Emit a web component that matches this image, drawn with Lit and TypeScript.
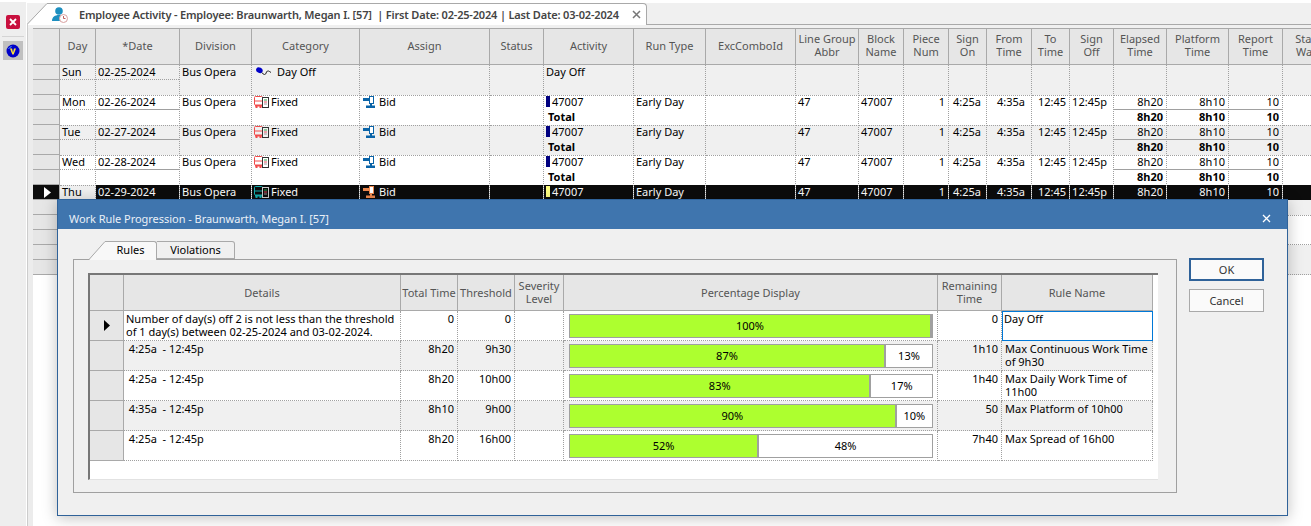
import { LitElement, css, html, nothing } from "lit";
import { customElement } from "lit/decorators.js";

const busIcon = (body: string, doc: string) => html`<svg class="ic" width="15" height="12" viewBox="0 0 15 12">
  <rect x=".5" y=".5" width="8" height="8.500" rx="1" fill="none" stroke=${body}></rect>
  <path d="M1 5h7" stroke=${body}></path>
  <path d="M1 9h7v1.500h-7z" fill=${body}></path>
  <rect x="1.500" y="10" width="2" height="2" fill=${body}></rect>
  <rect x="5.500" y="10" width="2" height="2" fill=${body}></rect>
  <rect x="8.500" y="1.500" width="6" height="10" fill="none" stroke=${doc}></rect>
  <path d="M10 4h3" stroke="#2fa84f"></path>
  <path d="M10 6h3" stroke="#e8485f"></path>
  <path d="M10 8h3" stroke="#9a9a9a"></path>
</svg>`;

const bidIcon = (c: string) => html`<svg class="ic" width="12" height="12" viewBox="0 0 12 12">
  <rect x="0" y="2" width="6" height="3" fill=${c}></rect>
  <rect x="6.500" y=".5" width="4" height="7" fill="#fff" stroke=${c}></rect>
  <rect x="7" y="7" width="2" height="3" fill=${c}></rect>
  <rect x="3" y="9.500" width="9" height="2.500" fill=${c}></rect>
</svg>`;

const dayOffIcon = html`<svg class="ic" width="16" height="9" viewBox="0 0 16 9">
  <ellipse cx="3.400" cy="3.200" rx="3.400" ry="2.700" transform="rotate(30 3.400 3.200)" fill="#0000c8"></ellipse>
  <path d="M6 5.500q1 2 2.500 2t2-2.500q.8-1.500 2-1t2.500 1.500" fill="none" stroke="#222"></path>
</svg>`;

type Day = { day: string; date: string; off?: boolean; sel?: boolean };

const days: Day[] = [
  { day: "Sun", date: "02-25-2024", off: true },
  { day: "Mon", date: "02-26-2024" },
  { day: "Tue", date: "02-27-2024" },
  { day: "Wed", date: "02-28-2024" },
  { day: "Thu", date: "02-29-2024", sel: true },
];

const headers = [
  "", "Day", "*Date", "Division", "Category", "Assign", "Status", "Activity", "Run Type", "ExcComboId",
  "Line Group\nAbbr", "Block\nName", "Piece\nNum", "Sign\nOn", "From\nTime", "To\nTime", "Sign\nOff",
  "Elapsed\nTime", "Platform\nTime", "Report\nTime", "Start\nWait",
];

const rules = [
  { d: "Number of day(s) off 2 is not less than the threshold\nof 1 day(s) between 02-25-2024 and 03-02-2024.", t: "0", th: "0", p: 100, rem: "0", name: "Day Off" },
  { d: " 4:25a  - 12:45p", t: "8h20", th: "9h30", p: 87, rem: "1h10", name: "Max Continuous Work Time\nof 9h30" },
  { d: " 4:25a  - 12:45p", t: "8h20", th: "10h00", p: 83, rem: "1h40", name: "Max Daily Work Time of\n11h00" },
  { d: " 4:35a  - 12:45p", t: "8h10", th: "9h00", p: 90, rem: "50", name: "Max Platform of 10h00" },
  { d: " 4:25a  - 12:45p", t: "8h20", th: "16h00", p: 52, rem: "7h40", name: "Max Spread of 16h00" },
];

@customElement("app-root")
export class AppRoot extends LitElement {
  static styles = css`
    :host {
      display: block;
      position: relative;
      width: 1311px;
      height: 526px;
      overflow: hidden;
      background: #fff;
      font: 11px/15px "Noto Sans", "Open Sans", sans-serif;
      color: #000;
    }
    .page { display: flex; height: 526px; }
    .tools {
      width: 26px;
      margin-top: 2px;
      background: #eee;
      display: flex;
      flex-direction: column;
      align-items: center;
      flex: none;
    }
    .close-btn {
      width: 14px;
      height: 14px;
      margin-top: 13px;
      border-radius: 2px;
      background: #c8103e;
      display: flex;
      align-items: center;
      justify-content: center;
    }
    .sep { width: 22px; height: 1px; background: #d4d4d4; margin-top: 7px; }
    .vtile {
      width: 20px;
      height: 19px;
      margin-top: 4px;
      background: #c0c0c0;
      display: flex;
      align-items: center;
      justify-content: center;
    }
    .main { flex: 1; min-width: 0; margin-left: 1px; }

    .strip {
      height: 22px;
      margin-top: 3px;
      display: flex;
      background: #f0f0f0;
      border-bottom: 1px solid #a9a9a9;
      box-sizing: border-box;
    }
    .doc-tab { display: flex; height: 22px; flex: none; }
    .doc-tab svg { flex: none; }
    .doc-tab .body {
      width: 600px;
      box-sizing: border-box;
      background: #fff;
      border-top: 1px solid #a9a9a9;
      border-right: 1px solid #a9a9a9;
      border-top-right-radius: 4px;
      display: flex;
      align-items: center;
      font-weight: 600;
      color: #444;
      letter-spacing: -.17px;
      white-space: pre;
    }
    .doc-tab .person { margin: 0 11px 0 5px; }
    .doc-tab .x { margin-left: 13px; }

    .gutter {
      height: 501px;
      box-sizing: border-box;
      padding-top: 3px;
      border-left: 1px solid #ccc;
      background:
        linear-gradient(#f0f0f0, #f0f0f0) 0 0 / 100% 3px no-repeat,
        linear-gradient(#ececec, #ececec) 0 0 / 5px 100% no-repeat;
    }
    .grid {
      --cols: 27px 36px 84px 72px 108px 130px 54px 90px 72px 90px 63px 45px 45px 38px 45px 38px 44px 53px 62px 54px 50px;
      margin-left: 5px;
    }
    .hrow, .row { display: grid; grid-template-columns: var(--cols); width: 1300px; }
    .hrow {
      height: 37px;
      box-sizing: border-box;
      border-top: 1px solid #a9a9a9;
      border-bottom: 1px solid #a9a9a9;
      background: #e6e6e6;
    }
    .hcell {
      border-right: 1px solid #a9a9a9;
      display: flex;
      align-items: center;
      justify-content: center;
      text-align: center;
      white-space: pre;
      color: #555;
      line-height: 13px;
    }
    .hrow .hcell { padding-bottom: 3px; box-sizing: border-box; }
    .rh .hcell { padding-bottom: 1px; box-sizing: border-box; }
    .row { height: 30px; background: #fff; }
    .row.alt { background: #f0f0f0; }
    .cell {
      border-right: 1px dotted #a0a0a0;
      border-bottom: 1px dotted #a0a0a0;
      box-sizing: border-box;
      min-width: 0;
    }
    .line {
      height: 15px;
      display: flex;
      align-items: center;
      padding: 0 0 2px 2px;
      box-sizing: border-box;
      white-space: pre;
    }
    .line.dot { border-bottom: 1px dotted #a0a0a0; padding-bottom: 1px; }
    .line.solid { border-bottom: 1px solid #a0a0a0; padding-bottom: 1px; }
    .line.end { justify-content: flex-end; padding-left: 0; padding-right: 3px; }
    .line.end6 { justify-content: flex-end; padding-left: 0; padding-right: 6px; }
    .line.end5 { justify-content: flex-end; padding-left: 0; padding-right: 5px; }
    .bold { font-weight: 700; }
    .total { margin-left: 2px; }
    .ic { flex: none; margin-right: 2px; }
    .wrap-off { display: flex; margin: 0 3px 0 2px; }
    .wrap-bid { display: flex; margin: 0 2px 0 1px; }
    .bar-mark { width: 4px; height: 11px; background: #000080; margin-right: 2px; flex: none; }
    .sel .line.top { background: #0c0c0c; color: #fff; }
    .sel .bar-mark { background: #ffff80; }
    .sel .cell.plain .line.top { background: none; color: #000; }
    .rhead {
      background: #e6e6e6;
      border-right: 1px solid #a9a9a9;
      display: flex;
      flex-direction: column;
    }
    .rhead i { display: flex; align-items: center; justify-content: center; height: 15px; box-sizing: border-box; border-bottom: 1px solid #a9a9a9; }
    .sel .rhead i:first-child { background: #0c0c0c; }
    .rhead svg { margin-left: 2px; }

    .dialog {
      position: absolute;
      left: 57px;
      top: 199px;
      width: 1231px;
      height: 317px;
      box-sizing: border-box;
      border: 1px solid #2f6299;
      background: #f0f0f0;
      box-shadow: 0 2px 14px rgba(0, 0, 0, .25);
    }
    .title {
      height: 29px;
      box-sizing: border-box;
      padding: 7px 16px 0 11px;
      background: #3f75ae;
      color: #eaf0f7;
      letter-spacing: -.04px;
      display: flex;
      align-items: center;
      justify-content: space-between;
    }
    .dbody { display: flex; gap: 12px; padding: 12px 0 0 15px; }
    .tabs { display: flex; height: 19px; margin-left: 16px; position: relative; z-index: 1; }
    .rules-tab { display: flex; height: 19px; }
    .rules-tab .lbl {
      width: 52px;
      box-sizing: border-box;
      padding-bottom: 3px;
      background: #f8f8f8;
      border-top: 1px solid #a9a9a9;
      border-right: 1px solid #a9a9a9;
      border-top-right-radius: 3px;
      display: flex;
      align-items: center;
      justify-content: center;
    }
    .vio {
      width: 78px;
      height: 18px;
      box-sizing: border-box;
      padding-bottom: 2px;
      background: #f0f0f0;
      border: 1px solid #a9a9a9;
      border-left: 0;
      border-top-right-radius: 3px;
      display: flex;
      align-items: center;
      justify-content: center;
    }
    .panel {
      width: 1104px;
      height: 234px;
      margin-top: -1px;
      box-sizing: border-box;
      border: 1px solid #a0a0a0;
      padding: 13px 0 0 14px;
    }
    .rgrid {
      --rcols: 34px 277px 57px 57px 49px 374px 64px 151px;
      width: 1070px;
      height: 207px;
      box-sizing: border-box;
      border-top: 2px solid #777;
      border-left: 2px solid #777;
      border-bottom: 1px solid #e2e2e2;
      background: #fff;
    }
    .rh, .rr { display: grid; grid-template-columns: var(--rcols); width: 1063px; }
    .rh { height: 36px; background: #e6e6e6; box-sizing: border-box; border-bottom: 1px solid #a9a9a9; }
    .rr { height: 30px; background: #fff; }
    .rr.alt { background: #f0f0f0; }
    .rc {
      box-sizing: border-box;
      border-right: 1px dotted #a0a0a0;
      border-bottom: 1px dotted #a0a0a0;
      padding: 1px 3px 0;
      line-height: 13px;
      white-space: pre;
    }
    .rc.det { padding-left: 2px; }
    .rc.num { text-align: right; }
    .rc.head {
      background: #e6e6e6;
      border-right: 1px solid #a9a9a9;
      border-bottom: 1px solid #a9a9a9;
      display: flex;
      align-items: center;
      justify-content: center;
      padding: 0;
    }
    .rc.active { border: 1px solid #0078d7; padding: 0 1px; }
    .rc.pct { padding: 3px 4px 0 5px; white-space: normal; }
    .pbar {
      display: flex;
      height: 24px;
      box-sizing: border-box;
      border: 1px solid #a0a0a0;
      background: #fff;
      line-height: 22px;
      text-align: center;
    }
    .pbar .fill { background: #adff2f; border-right: 2px solid #a0a0a0; box-sizing: border-box; }
    .pbar .rest { flex: 1; min-width: 0; }
    .btns { display: flex; flex-direction: column; gap: 8px; margin-top: 17px; }
    .btn {
      width: 75px;
      height: 23px;
      box-sizing: border-box;
      border: 1px solid #a9a9a9;
      background: #fafafa;
      display: flex;
      align-items: center;
      justify-content: center;
      color: #333;
    }
    .btn.def { border: 2px solid #2f6299; }
  `;

  private renderDay(d: Day, i: number) {
    const selClass = d.sel ? "sel" : "";
    const alt = i % 2 === 0 ? "alt" : "";
    const total = !d.off;
    const bus = d.sel ? busIcon("#14b0b0", "#cfcfcf") : busIcon("#f04a4a", "#333");
    const bid = d.sel ? bidIcon("#f08a50") : bidIcon("#0a64a8");
    const line = (top: unknown, bottom: unknown = "", cls = "", bcls = "") => html`<div class="cell">
      <div class="line top ${cls}">${top}</div>
      <div class="line ${bcls}">${bottom}</div>
    </div>`;
    const sum = (v: string) =>
      total
        ? line(v, html`<span class="bold">${v}</span>`, "end solid", "end")
        : line("", "");
    return html`<div class="row ${alt} ${selClass}">
      <div class="rhead">
        <i>${d.sel
          ? html`<svg width="7" height="11" viewBox="0 0 7 11"><path d="M0 0l7 5.500-7 5.500z" fill="#fff"></path></svg>`
          : nothing}</i>
        <i></i>
      </div>
      <div class="cell plain"><div class="line top dot">${d.day}</div></div>
      ${line(d.date, "", d.off ? "dot" : "solid")}
      ${line("Bus Opera")}
      ${line(d.off ? html`<span class="wrap-off">${dayOffIcon}</span>Day Off` : html`${bus}Fixed`)}
      ${line(d.off ? "" : html`<span class="wrap-bid">${bid}</span>Bid`)}
      ${line("")}
      ${d.off
        ? line("Day Off")
        : line(html`<span class="bar-mark"></span>47007`, html`<span class="bold total">Total</span>`)}
      ${line(d.off ? "" : "Early Day")}
      ${line("")}
      ${line(d.off ? "" : "47")}
      ${line(d.off ? "" : "47007")}
      ${line(d.off ? "" : "1", "", "end")}
      ${line(d.off ? "" : "4:25a", "", "end5")}
      ${line(d.off ? "" : "4:35a", "", "end6")}
      ${line(d.off ? "" : "12:45", "", "end")}
      ${line(d.off ? "" : "12:45p", "", "end6")}
      ${sum("8h20")}
      ${sum("8h10")}
      ${sum("10")}
      ${line("")}
    </div>`;
  }

  private renderEmpty(alt: boolean) {
    return html`<div class="row ${alt ? "alt" : ""}">
      <div class="rhead"><i></i><i></i></div>
      ${headers.slice(1).map(() => html`<div class="cell"></div>`)}
    </div>`;
  }

  private renderDialog() {
    return html`<div class="dialog">
      <div class="title">
        <span>Work Rule Progression - Braunwarth, Megan I. [57]</span>
        <svg width="9" height="9" viewBox="0 0 9 9"><path d="M1 1l7 7M8 1l-7 7" stroke="#fff" stroke-width="1.300"></path></svg>
      </div>
      <div class="dbody">
        <div>
          <div class="tabs">
            <div class="rules-tab">
              <svg width="16" height="19" viewBox="0 0 16 19"><path d="M0 19L16 .5V19z" fill="#f8f8f8"></path><path d="M0 18.500L16 .5" stroke="#a9a9a9" fill="none"></path></svg>
              <div class="lbl">Rules</div>
            </div>
            <div class="vio">Violations</div>
          </div>
          <div class="panel">
            <div class="rgrid">
              <div class="rh">
                ${["", "Details", "Total Time", "Threshold", "Severity\nLevel", "Percentage Display", "Remaining\nTime", "Rule Name"].map(
                  (h) => html`<div class="hcell">${h}</div>`
                )}
              </div>
              ${rules.map(
                (r, i) => html`<div class="rr ${i % 2 ? "alt" : ""}">
                  <div class="rc head">${i === 0
                    ? html`<svg width="6" height="11" viewBox="0 0 6 11"><path d="M0 0l6 5.500-6 5.500z" fill="#000"></path></svg>`
                    : nothing}</div>
                  <div class="rc det">${r.d}</div>
                  <div class="rc num">${r.t}</div>
                  <div class="rc num">${r.th}</div>
                  <div class="rc"></div>
                  <div class="rc pct">
                    <div class="pbar">
                      <div class="fill" style="width:${r.p < 100 ? `calc(${r.p}% + 1px)` : "100%"}">${r.p}%</div>
                      ${r.p < 100 ? html`<div class="rest">${100 - r.p}%</div>` : nothing}
                    </div>
                  </div>
                  <div class="rc num">${r.rem}</div>
                  <div class="rc ${i === 0 ? "active" : ""}">${r.name}</div>
                </div>`
              )}
            </div>
          </div>
        </div>
        <div class="btns">
          <div class="btn def">OK</div>
          <div class="btn">Cancel</div>
        </div>
      </div>
    </div>`;
  }

  render() {
    return html`<div class="page">
        <div class="tools">
          <div class="close-btn">
            <svg width="8" height="8" viewBox="0 0 8 8"><path d="M1 1l6 6M7 1l-6 6" stroke="#fff" stroke-width="1.800"></path></svg>
          </div>
          <div class="sep"></div>
          <div class="vtile">
            <svg width="14" height="14" viewBox="0 0 14 14">
              <circle cx="7" cy="7" r="6.500" fill="#0000c8"></circle>
              <path d="M2.500 5a5 5 0 0 1 3-2.500" stroke="#4aa0ff" fill="none"></path>
              <path d="M4 4.500h2l1 4 1-4h2l-2.300 6h-1.400z" fill="#ffe23a"></path>
            </svg>
          </div>
        </div>
        <div class="main">
          <div class="strip">
            <div class="doc-tab">
              <svg width="20" height="22" viewBox="0 0 20 22"><path d="M0 22L20 .5V22z" fill="#fff"></path><path d="M0 21.500L20 .5" stroke="#a9a9a9" fill="none"></path></svg>
              <div class="body">
                <svg class="person" width="16" height="16" viewBox="0 0 16 16">
                  <circle cx="7" cy="4" r="3.800" fill="#1d8fc0"></circle>
                  <path d="M0 14c0-4 3-6 7-6 2 0 3 .5 4 1.500-2 1-3 3-3 4.500z" fill="#1d8fc0"></path>
                  <circle cx="11.500" cy="11.500" r="4" fill="#fff" stroke="#d9a0a0"></circle>
                  <path d="M11.500 9v2.500h2" stroke="#c06060" fill="none"></path>
                </svg>
                <span>Employee Activity - Employee: Braunwarth, Megan I. [57]  | First Date: 02-25-2024 | Last Date: 03-02-2024</span>
                <svg class="x" width="9" height="9" viewBox="0 0 9 9"><path d="M1 1l7 7M8 1l-7 7" stroke="#777" stroke-width="1.500"></path></svg>
              </div>
            </div>
          </div>
          <div class="gutter">
            <div class="grid">
              <div class="hrow">${headers.map((h) => html`<div class="hcell">${h}</div>`)}</div>
              ${days.map((d, i) => this.renderDay(d, i))}
              ${this.renderEmpty(false)}
              ${this.renderEmpty(true)}
            </div>
          </div>
        </div>
      </div>
      ${this.renderDialog()}`;
  }
}
